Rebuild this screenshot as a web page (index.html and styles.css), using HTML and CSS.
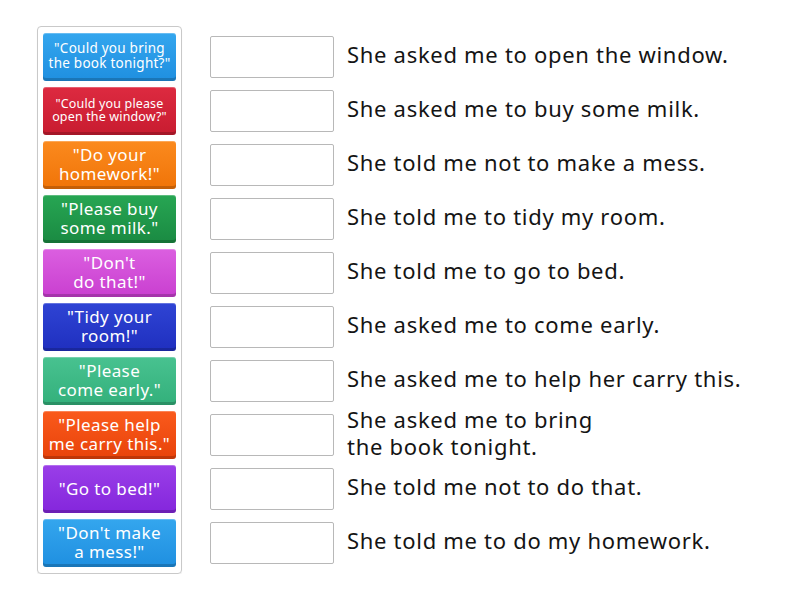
FILE: index.html
```html
<!DOCTYPE html>
<html>
<head>
<meta charset="utf-8">
<link rel="stylesheet" href="styles.css">
</head>
<body>
<div class="page">
  <div class="bank">
    <div class="tile blue fs-m">"Could you bring the book tonight?"</div>
    <div class="tile red fs-s">"Could you please open the window?"</div>
    <div class="tile orange">"Do your<br>homework!"</div>
    <div class="tile green">"Please buy<br>some milk."</div>
    <div class="tile pink">"Don't<br>do that!"</div>
    <div class="tile navy">"Tidy your<br>room!"</div>
    <div class="tile mint">"Please<br>come early."</div>
    <div class="tile flame">"Please help<br>me carry this."</div>
    <div class="tile purple">"Go to bed!"</div>
    <div class="tile blue">"Don't make<br>a mess!"</div>
  </div>
  <div class="rows">
    <div class="row"><div class="slot"></div><div class="text">She asked me to open the window.</div></div>
    <div class="row"><div class="slot"></div><div class="text">She asked me to buy some milk.</div></div>
    <div class="row"><div class="slot"></div><div class="text">She told me not to make a mess.</div></div>
    <div class="row"><div class="slot"></div><div class="text">She told me to tidy my room.</div></div>
    <div class="row"><div class="slot"></div><div class="text">She told me to go to bed.</div></div>
    <div class="row"><div class="slot"></div><div class="text">She asked me to come early.</div></div>
    <div class="row"><div class="slot"></div><div class="text">She asked me to help her carry this.</div></div>
    <div class="row"><div class="slot"></div><div class="text">She asked me to bring<br>the book tonight.</div></div>
    <div class="row"><div class="slot"></div><div class="text">She told me not to do that.</div></div>
    <div class="row"><div class="slot"></div><div class="text">She told me to do my homework.</div></div>
  </div>
</div>
</body>
</html>
```
FILE: styles.css
```css
html, body {
  margin: 0;
  padding: 0;
  background: #fff;
}
body {
  font-family: "Noto Sans", "DejaVu Sans", sans-serif;
  color: #111;
}
.page {
  display: flex;
  align-items: flex-start;
  padding: 26px 0 0 37px;
  gap: 28px;
}
.bank {
  width: 133px;
  border: 1px solid #c9c9c9;
  border-radius: 4px;
  padding: 6px 5px 6px 5px;
  display: flex;
  flex-direction: column;
  gap: 6px;
  box-shadow: 0 1px 1px rgba(0,0,0,0.08);
}
.tile {
  height: 48px;
  border-radius: 3px;
  display: flex;
  align-items: center;
  justify-content: center;
  text-align: center;
  color: #fff;
  font-size: 17px;
  font-weight: 400;
  letter-spacing: 0.4px;
  line-height: 19px;
  padding: 0 0 2px;
  box-sizing: border-box;
  white-space: nowrap;
  box-shadow: inset 0 1px 0 rgba(255,255,255,0.25), inset 0 -3px 0 rgba(0,0,0,0.18);
}
.fs-m { font-size: 13.5px; line-height: 15px; letter-spacing: 0.25px; white-space: normal; }
.fs-s { font-size: 12.5px; line-height: 13px; letter-spacing: 0.15px; white-space: normal; }
.blue { background: linear-gradient(#34a6ee, #1f8fe0); }
.red { background: linear-gradient(#dd2a40, #c81c30); }
.orange { background: linear-gradient(#fb8a1e, #f07408); }
.green { background: linear-gradient(#27a653, #1a8a42); }
.pink { background: linear-gradient(#db5fe0, #c93fd0); }
.navy { background: linear-gradient(#2f44d4, #1f2fbf); }
.mint { background: linear-gradient(#48c290, #33b07b); }
.flame { background: linear-gradient(#fa5a1c, #e8420a); }
.purple { background: linear-gradient(#9a3ee8, #8426dc); }
.rows {
  padding-top: 7px;
  display: flex;
  flex-direction: column;
  gap: 6px;
}
.row {
  height: 48px;
  display: flex;
  align-items: center;
  gap: 13px;
}
.slot {
  width: 122px;
  height: 40px;
  flex: none;
  border: 1px solid #b8b8b8;
  border-radius: 2px;
  background: #fff;
}
.text {
  font-size: 22px;
  letter-spacing: 0.7px;
  line-height: 27px;
  color: #141414;
  padding-bottom: 5px;
}
```
